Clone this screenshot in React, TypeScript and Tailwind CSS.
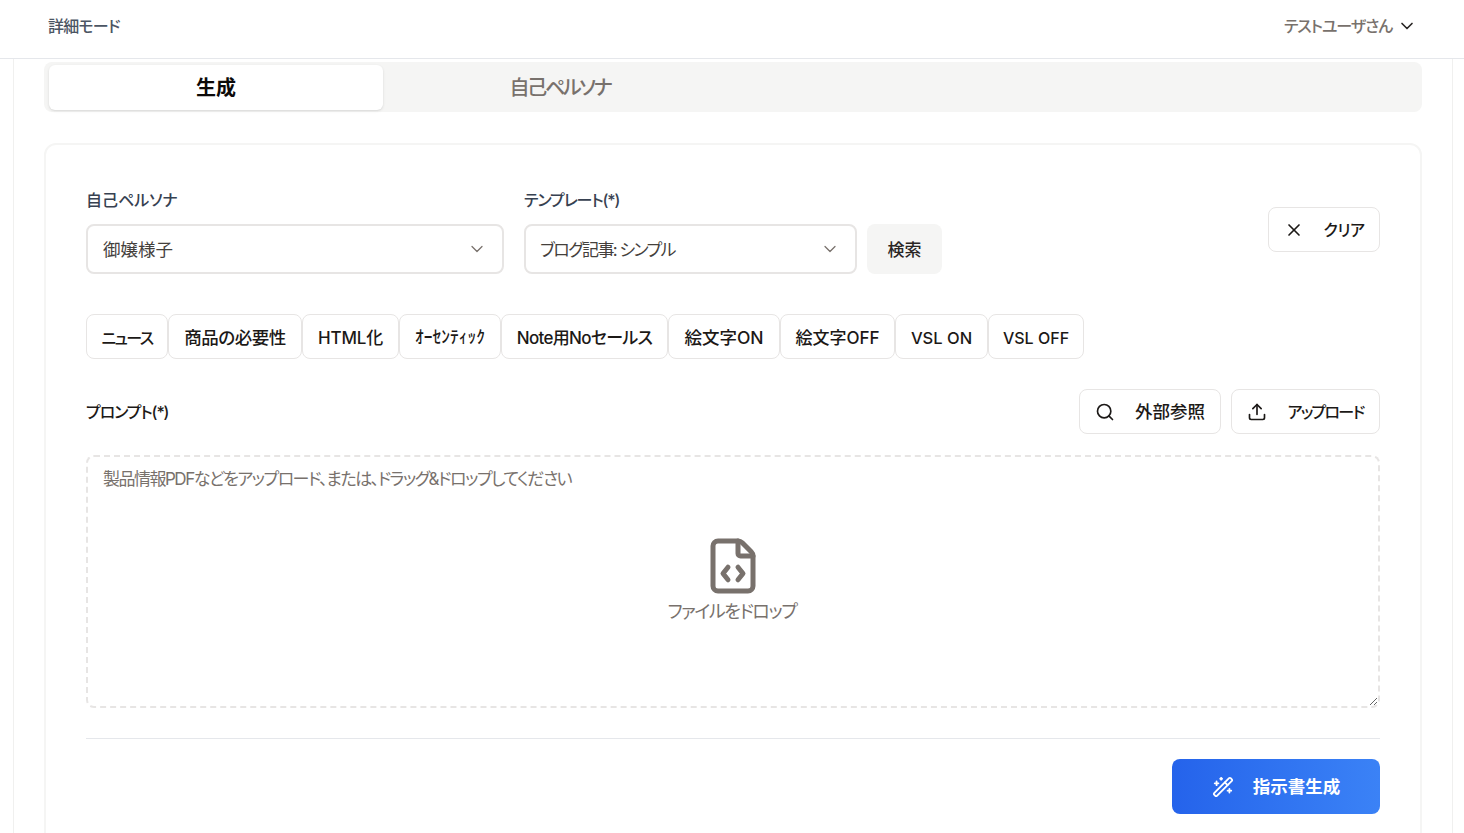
import { ChevronDown, X, Search, Upload, WandSparkles, FileCode } from "lucide-react";

const tags: [string, string][] = [
  ["ニュース", "w-[82px] text-[16px] tracking-[-1.6px] pt-[2px]"],
  ["商品の必要性", "w-[134px] text-[17.5px] tracking-[-0.5px] pt-[4px]"],
  ["HTML化", "w-[97px] text-[17px] tracking-[-0.2px] pt-[4px]"],
  ["ｵｰｾﾝﾃｨｯｸ", "w-[102px] text-[17.5px] pt-[2px]"],
  ["Note用Noセールス", "w-[167px] text-[17px] tracking-[-0.7px] pt-[4px]"],
  ["絵文字ON", "w-[112px] text-[17.5px] pt-[4px]"],
  ["絵文字OFF", "w-[115px] text-[17px] pt-[4px]"],
  ["VSL ON", "w-[93px] text-[16.5px] pt-[4px]"],
  ["VSL OFF", "w-[96px] text-[16px] pt-[2px]"],
];

export default function App() {
  return (
    <div className="h-[833px] overflow-hidden bg-white text-[16px] text-stone-800 font-['Inter','Noto_Sans_CJK_JP',sans-serif] [font-feature-settings:'palt']">
      <header className="h-[59px] flex items-center justify-between border-b border-[#e5e7eb] pl-[48px] pr-[47px] pb-[7px]">
        <span className="text-[#4b5563] font-medium tracking-[-0.8px]">詳細モード</span>
        <span className="flex items-center gap-[5px] text-[#78716c] font-medium tracking-[-1.1px]">
          テストユーザさん
          <ChevronDown className="w-[20px] h-[20px] text-stone-800" />
        </span>
      </header>
      <main className="mx-[13px] w-[1440px] border-x border-[#f0f0ef] h-[774px] pt-[3px] pl-[30px] pr-[29px]">
        <div className="grid grid-cols-[334px_334px] gap-[10px] bg-[#f5f5f4] rounded-lg px-[5px] pt-[3px] pb-[2px] h-[50px] w-[1378px]">
          <button className="bg-white rounded-md text-[20px] font-semibold text-[#0c0a09] shadow-sm">生成</button>
          <button className="text-[20px] font-medium text-[#78716c] tracking-[-2.3px]">自己ペルソナ</button>
        </div>
        <section className="mt-[31px] w-[1378px] h-[720px] border-2 border-[#f5f5f4] rounded-xl px-[40px] pt-[43px]">
          <div className="flex items-end justify-between">
            <div className="flex items-end">
              <div className="w-[418px]">
                <div className="text-[#374151] font-medium mb-[12px] leading-[24px]">自己ペルソナ</div>
                <div className="h-[50px] border-2 border-[#e7e5e4] rounded-lg flex items-center justify-between pl-[15px] pr-[15px]">
                  <span className="text-[#44403c] text-[17.5px] pt-[2px]">御嬢様子</span>
                  <ChevronDown className="w-[20px] h-[20px] text-[#78716c]" strokeWidth={1.5} />
                </div>
              </div>
              <div className="w-[333px] ml-[20px]">
                <div className="text-[#374151] font-medium mb-[12px] leading-[24px] tracking-[-1.1px]">テンプレート(*)</div>
                <div className="h-[50px] border-2 border-[#e7e5e4] rounded-lg flex items-center justify-between pl-[14px] pr-[15px]">
                  <span className="text-[#44403c] text-[17px] tracking-[-1.6px] pt-[4px]">ブログ記事: シンプル</span>
                  <ChevronDown className="w-[20px] h-[20px] text-[#78716c]" strokeWidth={1.5} />
                </div>
              </div>
              <button className="ml-[10px] w-[75px] h-[50px] bg-[#f5f5f4] rounded-lg font-medium text-[17px] text-[#292524] pt-[4px]">検索</button>
            </div>
            <button className="mb-[22px] w-[112px] h-[45px] border border-[#e7e5e4] rounded-lg flex items-center justify-center gap-[20px] font-medium text-[#1c1917] tracking-[-0.5px]">
              <X className="w-[20px] h-[20px]" />
              クリア
            </button>
          </div>

          <div className="flex mt-[40px]">
            {tags.map(([t, w]) => (
              <button key={t} className={`${w} h-[45px] border border-[#e7e5e4] rounded-lg font-medium text-[#1c1917] whitespace-nowrap`}>
                {t}
              </button>
            ))}
          </div>

          <div className="flex items-center justify-between mt-[30px]">
            <span className="font-medium text-[#1c1917] tracking-[-1.1px]">プロンプト(*)</span>
            <div className="flex gap-[10px]">
              <button className="w-[142px] h-[45px] border border-[#e7e5e4] rounded-lg flex items-center justify-center gap-[20px] font-medium text-[17.5px] text-[#1c1917]">
                <Search className="w-[20px] h-[20px]" />
                <span className="pt-[2px]">外部参照</span>
              </button>
              <button className="w-[149px] h-[45px] border border-[#e7e5e4] rounded-lg flex items-center justify-center gap-[20px] font-medium text-[#1c1917] tracking-[-1.7px]">
                <Upload className="w-[20px] h-[20px]" />
                アップロード
              </button>
            </div>
          </div>

          <div className="relative mt-[21px] h-[253px]">
            <textarea
              className="block w-full h-full border-2 border-dashed border-[#e7e5e4] rounded-lg px-[15px] py-[10px] text-[17px] tracking-[-1.5px] outline-none placeholder:text-[#78716c]"
              placeholder="製品情報PDFなどをアップロード、または、ドラッグ&ドロップしてください"
            />
            <div className="absolute left-0 right-0 top-[81px] flex flex-col items-center pointer-events-none text-[#78716c]">
              <FileCode className="w-[60px] h-[60px]" strokeWidth={2} />
              <span className="text-[18px] leading-[28px] mt-[2px] tracking-[-1.4px] -translate-x-px">ファイルをドロップ</span>
            </div>
          </div>

          <div className="mt-[30px] border-t border-[#e5e7eb] pt-[20px] flex justify-end">
            <button className="w-[208px] h-[55px] rounded-lg bg-gradient-to-r from-[#2563eb] to-[#3b82f6] text-white font-semibold text-[17.5px] flex items-center justify-center gap-[19px]">
              <WandSparkles className="w-[22px] h-[22px]" />
              <span className="pt-[2px]">指示書生成</span>
            </button>
          </div>
        </section>
      </main>
    </div>
  );
}
